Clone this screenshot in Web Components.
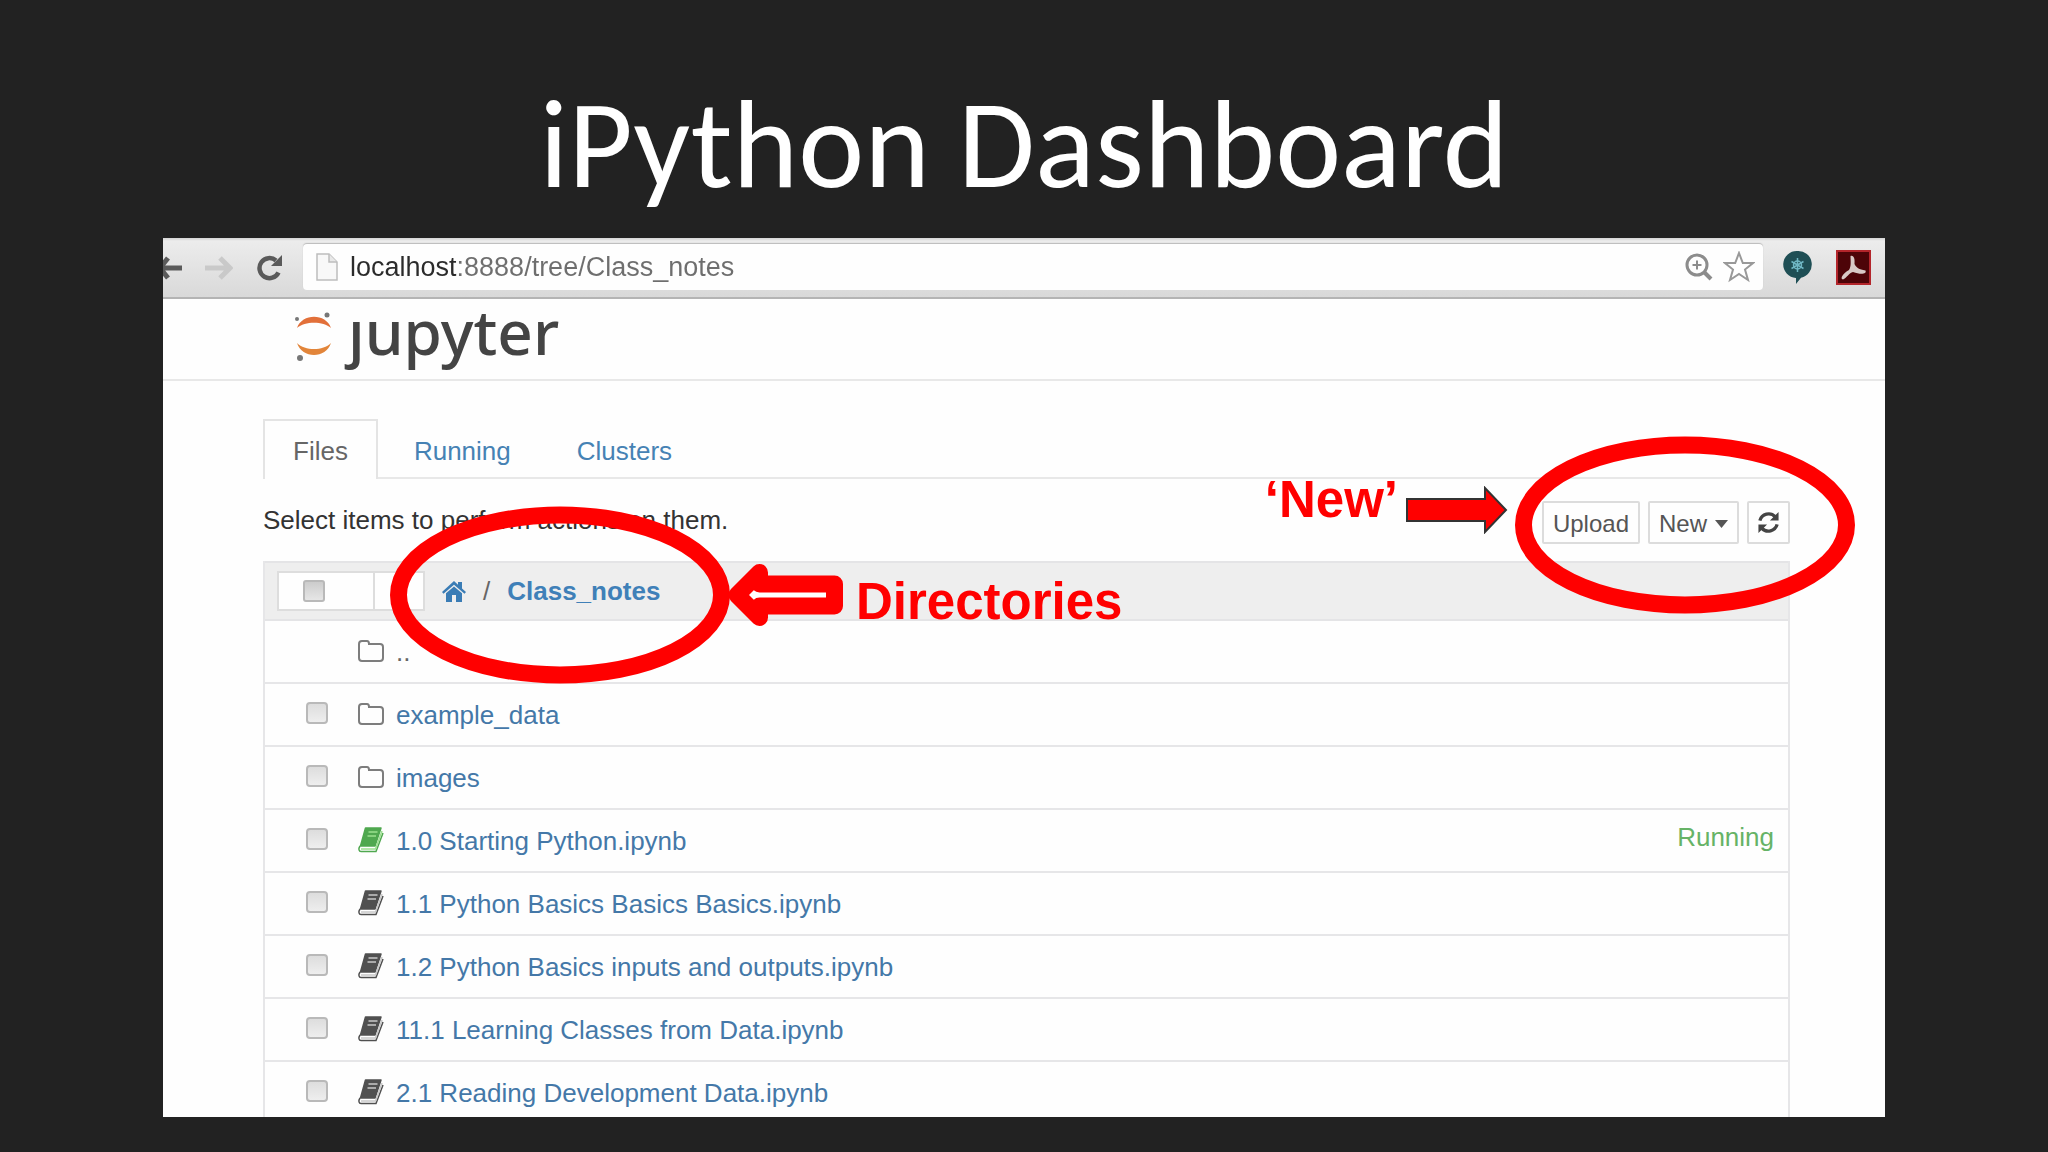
<!DOCTYPE html>
<html lang="en">
<head>
<meta charset="utf-8">
<title>iPython Dashboard</title>
<style>
  html, body { margin: 0; height: 100%; background: #222; }
  body { font-family: "Liberation Sans", Arial, sans-serif; }
</style>
</head>
<body>
<title-slide>
  <span slot="title">iPython Dashboard</span>
  <browser-bar url="localhost:8888/tree/Class_notes"></browser-bar>
  <jupyter-brand></jupyter-brand>
  <notebook-tree></notebook-tree>
  <call-out slot="notes" kind="ring" style="left:227px;top:268px"></call-out>
  <call-out slot="notes" kind="back" style="left:563px;top:326px">Directories</call-out>
  <call-out slot="notes" kind="forward" style="right:377px;top:232px">‘New’</call-out>
  <call-out slot="notes" kind="ring" style="right:30px;top:198px"></call-out>
</title-slide>

<script>
const define = (name, html, setup) => {
  const template = document.createElement('template');
  template.innerHTML = html;
  customElements.define(name, class extends HTMLElement {
    constructor() {
      super();
      this.attachShadow({ mode: 'open' }).append(template.content.cloneNode(true));
    }
    connectedCallback() { if (setup) setup(this, this.shadowRoot); }
  });
};

define('title-slide', `
  <style>
    :host { display: flex; flex-direction: column; height: 100vh; box-sizing: border-box; padding: 0 163px 35px; background: #222; }
    h1 { margin: 0; padding-top: 52px; text-align: center; color: #fff; font: 400 125px/186px Carlito, Lato, sans-serif; white-space: nowrap; }
    .shot { position: relative; flex: 1; min-height: 0; overflow: hidden; background: #fefefe; }
  </style>
  <h1><slot name="title"></slot></h1>
  <div class="shot"><slot></slot><slot name="notes"></slot></div>
`);

define('browser-bar', `
  <style>
    :host { display: flex; align-items: center; height: 61px; box-sizing: border-box; padding-right: 14px;
      background: linear-gradient(#d4d4d4, #ececec 3px, #d9d9d9); border-bottom: 2px solid #b4b4b4; }
    button { border: 0; padding: 0; background: none; display: flex; }
    svg { display: block; flex: none; }
    .back { margin-right: 20px; } .fwd { margin-right: 24px; } .reload { margin-right: 20px; }
    .box { flex: 1; display: flex; align-items: center; height: 46px; margin-bottom: 2px; padding: 0 8px 0 13px; background: #fefefe; border-radius: 4px; box-shadow: 0 -1px 1px #bbb; }
    input { flex: 1; min-width: 0; border: 0; outline: 0; padding: 0; margin-left: 12px; height: 34px; font: 27px/34px "Liberation Sans", Arial, sans-serif;
      color: transparent; background: linear-gradient(90deg, #2b2b2b 106px, #6e6e6e 106px); -webkit-background-clip: text; background-clip: text; }
    .star { margin-left: 10px; }
    .ext { margin-left: 20px; } .pdf { margin-left: 24px; }
  </style>
  <button class="back" aria-label="Back"><svg width="20" height="28" viewBox="0 0 20 28"><path d="M0 14H19M5 4L-3 14L5 24" fill="none" stroke="#5a5a5a" stroke-width="5"/></svg></button>
  <button class="fwd" aria-label="Forward"><svg width="30" height="28" viewBox="0 0 30 28"><path d="M2 14H26M17 4L27 14L17 24" fill="none" stroke="#c9c9c9" stroke-width="5"/></svg></button>
  <button class="reload" aria-label="Reload"><svg width="26" height="28" viewBox="0 0 26 28"><path d="M21.500 18.500A10 10 0 1 1 19 6.500" fill="none" stroke="#5a5a5a" stroke-width="4.500"/><path d="M25 1V12H14Z" fill="#5a5a5a"/></svg></button>
  <div class="box">
    <svg width="22" height="28" viewBox="0 0 22 28"><path d="M1 1H13L21 9V27H1Z" fill="#f8f8f8" stroke="#bdbdbd" stroke-width="1.500"/><path d="M13 1V9H21" fill="#e8e8e8" stroke="#bdbdbd" stroke-width="1.500"/></svg>
    <input type="text" aria-label="Address">
    <svg width="28" height="28" viewBox="0 0 28 28" fill="none" stroke="#8c8c8c"><circle cx="12" cy="12" r="10" stroke-width="3"/><path d="M12 7.500V16.500M7.500 12H16.500" stroke-width="2"/><path d="M19 19L26 26" stroke-width="4"/></svg>
    <svg class="star" width="32" height="32" viewBox="0 0 32 32"><path d="M16 2L19.800 12H30L22 18.500L25 29L16 23L7 29L10 18.500L2 12H12.200Z" fill="#fff" stroke="#999" stroke-width="2"/></svg>
  </div>
  <svg class="ext" width="29" height="35" viewBox="0 0 29 35"><path d="M14.500 1A13.500 13.500 0 0 1 18 27.700L13 34V28A13.500 13.500 0 0 1 14.500 1Z" fill="#1f4f55"/><path d="M14.500 8V22M8.500 11.500L20.500 18.500M20.500 11.500L8.500 18.500" stroke="#6fb7c4" stroke-width="1.500"/><circle cx="14.500" cy="15" r="4" fill="none" stroke="#6fb7c4" stroke-width="1.500"/></svg>
  <svg class="pdf" width="35" height="35" viewBox="0 0 35 35"><rect x="1" y="1" width="33" height="33" fill="#4d0408" stroke="#b3252b" stroke-width="2"/><path d="M14.500 6C18 5 19 9 18.500 14C20 17.500 23 19.500 29.500 20.500C31 24 25 25 17 22C13 22.500 11 28 7 29.500C3.500 29 7 23 13 20C15.500 16 14.500 11 14.500 6Z" fill="#d8c9c6"/></svg>
`, (el, root) => { root.querySelector('input').value = el.getAttribute('url'); });

define('jupyter-brand', `
  <style>
    :host { display: flex; align-items: center; gap: 14px; height: 82px; box-sizing: border-box; padding: 0 0 16px 131px; border-bottom: 2px solid #e8e8e8; }
    /* The wordmark's j carries no dot. */
    .word { font: 500 62px/60px "Noto Sans", "Open Sans", sans-serif; color: #444; margin: -12px 0; padding: 12px 0;
      clip-path: polygon(20px 0, 100% 0, 100% 100%, -20px 100%, -20px 32px, 20px 32px); }
    svg { display: block; margin-top: 8px; }
  </style>
  <svg width="40" height="52" viewBox="0 0 40 52" aria-hidden="true">
    <path d="M3 19C8 4 32 4 37 19C29 12 11 12 3 19Z" fill="#e2703a"/>
    <path d="M3 34C8 50 32 50 37 34C29 42 11 42 3 34Z" fill="#e2853a"/>
    <circle cx="3" cy="10" r="2" fill="#777"/><circle cx="33" cy="6" r="2.500" fill="#777"/><circle cx="6" cy="49" r="3" fill="#777"/>
  </svg>
  <span class="word">jupyter</span>
`);

const ICONS = {
  folder: '<svg width="28" height="24" viewBox="0 0 28 24"><path d="M2 5Q2 2 5 2H10Q12 2 12 5H23Q26 5 26 8V19Q26 22 23 22H5Q2 22 2 19Z" fill="none" stroke="#7d7d7d" stroke-width="2"/></svg>',
  book: c => `<svg width="28" height="26" viewBox="0 0 28 26"><path d="M8.500 1H24L18 19H3.500Z" fill="${c[0]}" stroke="${c[0]}" stroke-width="1.500" stroke-linejoin="round"/><path d="M11.500 5H20.500M10.500 9H19" stroke="${c[1]}" stroke-width="1.500"/><path d="M3 19C1 22 2 24.500 4 24.500H19L26 6" fill="none" stroke="${c[0]}" stroke-width="1.500"/><path d="M4 22H18.500L25 4" fill="none" stroke="${c[1]}" stroke-width="1.500"/></svg>`
};

define('file-row', `
  <style>
    :host { display: flex; align-items: center; height: 63px; box-sizing: border-box; border-bottom: 2px solid #e6e6e8; padding: 0 14px 0 41px; font-size: 26px; line-height: 30px; }
    input { appearance: none; width: 22px; height: 22px; margin: 0 29px 4px 0; border: 2px solid #b9b9b9; border-radius: 4px; background: linear-gradient(#ddd, #eee); }
    :host([parent]) input { visibility: hidden; }
    .icon { width: 28px; margin-right: 11px; padding-bottom: 2px; }
    .icon svg { display: block; }
    a { color: #4478a8; text-decoration: none; white-space: nowrap; flex: 1; }
    :host([parent]) a { color: #666; }
    output { color: #66b366; padding-bottom: 8px; }
  </style>
  <input type="checkbox"><span class="icon"></span><a href="#"><slot></slot></a>
`, (el, root) => {
  const kind = el.getAttribute('kind');
  root.querySelector('input').setAttribute('aria-label', 'Select ' + el.textContent);
  root.querySelector('.icon').innerHTML = kind === 'folder' ? ICONS.folder
    : ICONS.book(kind === 'live' ? ['#4fa84f', '#9be08f'] : ['#505050', '#c8c8c8']);
  if (kind === 'live') {
    const status = document.createElement('output');
    status.textContent = 'Running';
    root.append(status);
  }
});

define('tree-tabs', `
  <style>
    :host { display: flex; gap: 6px; border-bottom: 2px solid #e8e8e8; }
    a { box-sizing: border-box; height: 58px; padding: 15px 28px 0; border: 2px solid transparent; border-bottom: 0; color: #4682b4; font-size: 26px; line-height: 30px; text-decoration: none; }
    a.on { color: #666; border-color: #e4e4e4; background: #fefefe; margin-bottom: -2px; height: 60px; }
  </style>
  <a class="on" href="#files">Files</a><a href="#running">Running</a><a href="#clusters">Clusters</a>
`);

define('tree-actions', `
  <style>
    :host { display: flex; align-items: flex-start; justify-content: space-between; padding: 22px 0 17px; }
    p { margin: 0; padding-top: 4px; font-size: 26px; line-height: 30px; color: #333; }
    .set { display: flex; gap: 8px; }
    button { display: flex; align-items: center; gap: 8px; height: 43px; box-sizing: border-box; padding: 2px 9px 0; border: 2px solid #dcdcdc; border-radius: 2px; background: #fefefe; color: #555; font: 24px/30px "Liberation Sans", Arial, sans-serif; }
    svg { display: block; }
    .r { padding: 0 8px; }
  </style>
  <p>Select items to perform actions on them.</p>
  <div class="set">
    <button>Upload</button>
    <button>New <svg width="13" height="8" viewBox="0 0 13 8"><path d="M0 0H13L6.500 8Z" fill="#555"/></svg></button>
    <button class="r" aria-label="Refresh"><svg width="23" height="23" viewBox="0 0 24 24"><path d="M3 10A9.500 9.500 0 0 1 19 6M21 14A9.500 9.500 0 0 1 5 18" fill="none" stroke="#444" stroke-width="3.500"/><path d="M22.500 1V10H13.500ZM1.500 23V14H10.500Z" fill="#444"/></svg></button>
  </div>
`);

define('tree-crumbs', `
  <style>
    :host { display: flex; align-items: center; height: 60px; box-sizing: border-box; padding-left: 12px; background: #eee; border-top: 2px solid #e4e4e6; border-bottom: 2px solid #e4e4e6; font-size: 26px; line-height: 30px; }
    .pick { display: flex; border: 2px solid #ddd; background: #fefefe; height: 36px; margin-right: 17px; }
    label { width: 96px; display: flex; align-items: center; padding-left: 24px; box-sizing: border-box; border-right: 2px solid #ddd; }
    .drop { width: 48px; border: 0; background: none; padding: 0; }
    input { appearance: none; width: 22px; height: 22px; margin: 0; border: 2px solid #b9b9b9; border-radius: 3px; background: linear-gradient(#ccc, #e6e6e6); }
    a { color: #3f80b8; text-decoration: none; font-weight: bold; }
    svg { display: block; }
    .sep { color: #666; margin: 0 17px; }
  </style>
  <div class="pick"><label><input type="checkbox" aria-label="Select all"></label><button class="drop" aria-label="Select by type"></button></div>
  <a href="#home" aria-label="Home"><svg width="24" height="21" viewBox="0 0 24 21"><path d="M12 0L16 3.700V1H20V7.500L24 11L22.500 12.800L12 3.800L1.500 12.800L0 11Z" fill="#3a7cb5"/><path d="M12 5.500L20 12.300V21H14V14H10V21H4V12.300Z" fill="#3a7cb5"/></svg></a>
  <span class="sep">/</span><a href="#class">Class_notes</a>
`);

define('notebook-tree', `
  <style>
    :host { display: block; padding: 38px 95px 0 100px; }
    .list { border: solid #e6e6e8; border-width: 0 2px; }
  </style>
  <tree-tabs></tree-tabs>
  <tree-actions></tree-actions>
  <div class="list">
    <tree-crumbs></tree-crumbs>
    <file-row kind="folder" parent>..</file-row>
    <file-row kind="folder">example_data</file-row>
    <file-row kind="folder">images</file-row>
    <file-row kind="live">1.0 Starting Python.ipynb</file-row>
    <file-row kind="book">1.1 Python Basics Basics Basics.ipynb</file-row>
    <file-row kind="book">1.2 Python Basics inputs and outputs.ipynb</file-row>
    <file-row kind="book">11.1 Learning Classes from Data.ipynb</file-row>
    <file-row kind="book">2.1 Reading Development Data.ipynb</file-row>
  </div>
`);

/* Red markers laid over the dashboard: a ring, or an arrow with its label. */
define('call-out', `
  <style>
    :host { position: absolute; display: flex; align-items: center; color: #f00; font: bold 51px/60px "Liberation Sans", Arial, sans-serif; pointer-events: none; }
    svg { display: none; flex: none; }
    :host([kind=ring]) .ring, :host([kind=back]) .back, :host([kind=forward]) .forward { display: block; }
    :host([kind=back]) { gap: 10px; align-items: flex-start; }
    :host([kind=back]) .label { padding-top: 8px; }
    :host([kind=forward]) { gap: 8px; align-items: flex-start; }
    .forward { margin-top: 16px; }
  </style>
  <svg class="ring" width="340" height="178" viewBox="0 0 340 178"><ellipse cx="170" cy="89" rx="161.500" ry="80" fill="none" stroke="#f00" stroke-width="17"/></svg>
  <svg class="back" width="120" height="62" viewBox="0 0 120 62"><path d="M11 31L33.500 8.500V20H108.500V42H33.500V53.500Z" fill="#fff" stroke="#f00" stroke-width="17" stroke-linejoin="round"/></svg>
  <span class="label"><slot></slot></span>
  <svg class="forward" width="102" height="48" viewBox="0 0 102 48"><path d="M1 13H79V2L100 24L79 46V35H1Z" fill="#f00" stroke="#333" stroke-width="2"/></svg>
`);
</script>
</body>
</html>
